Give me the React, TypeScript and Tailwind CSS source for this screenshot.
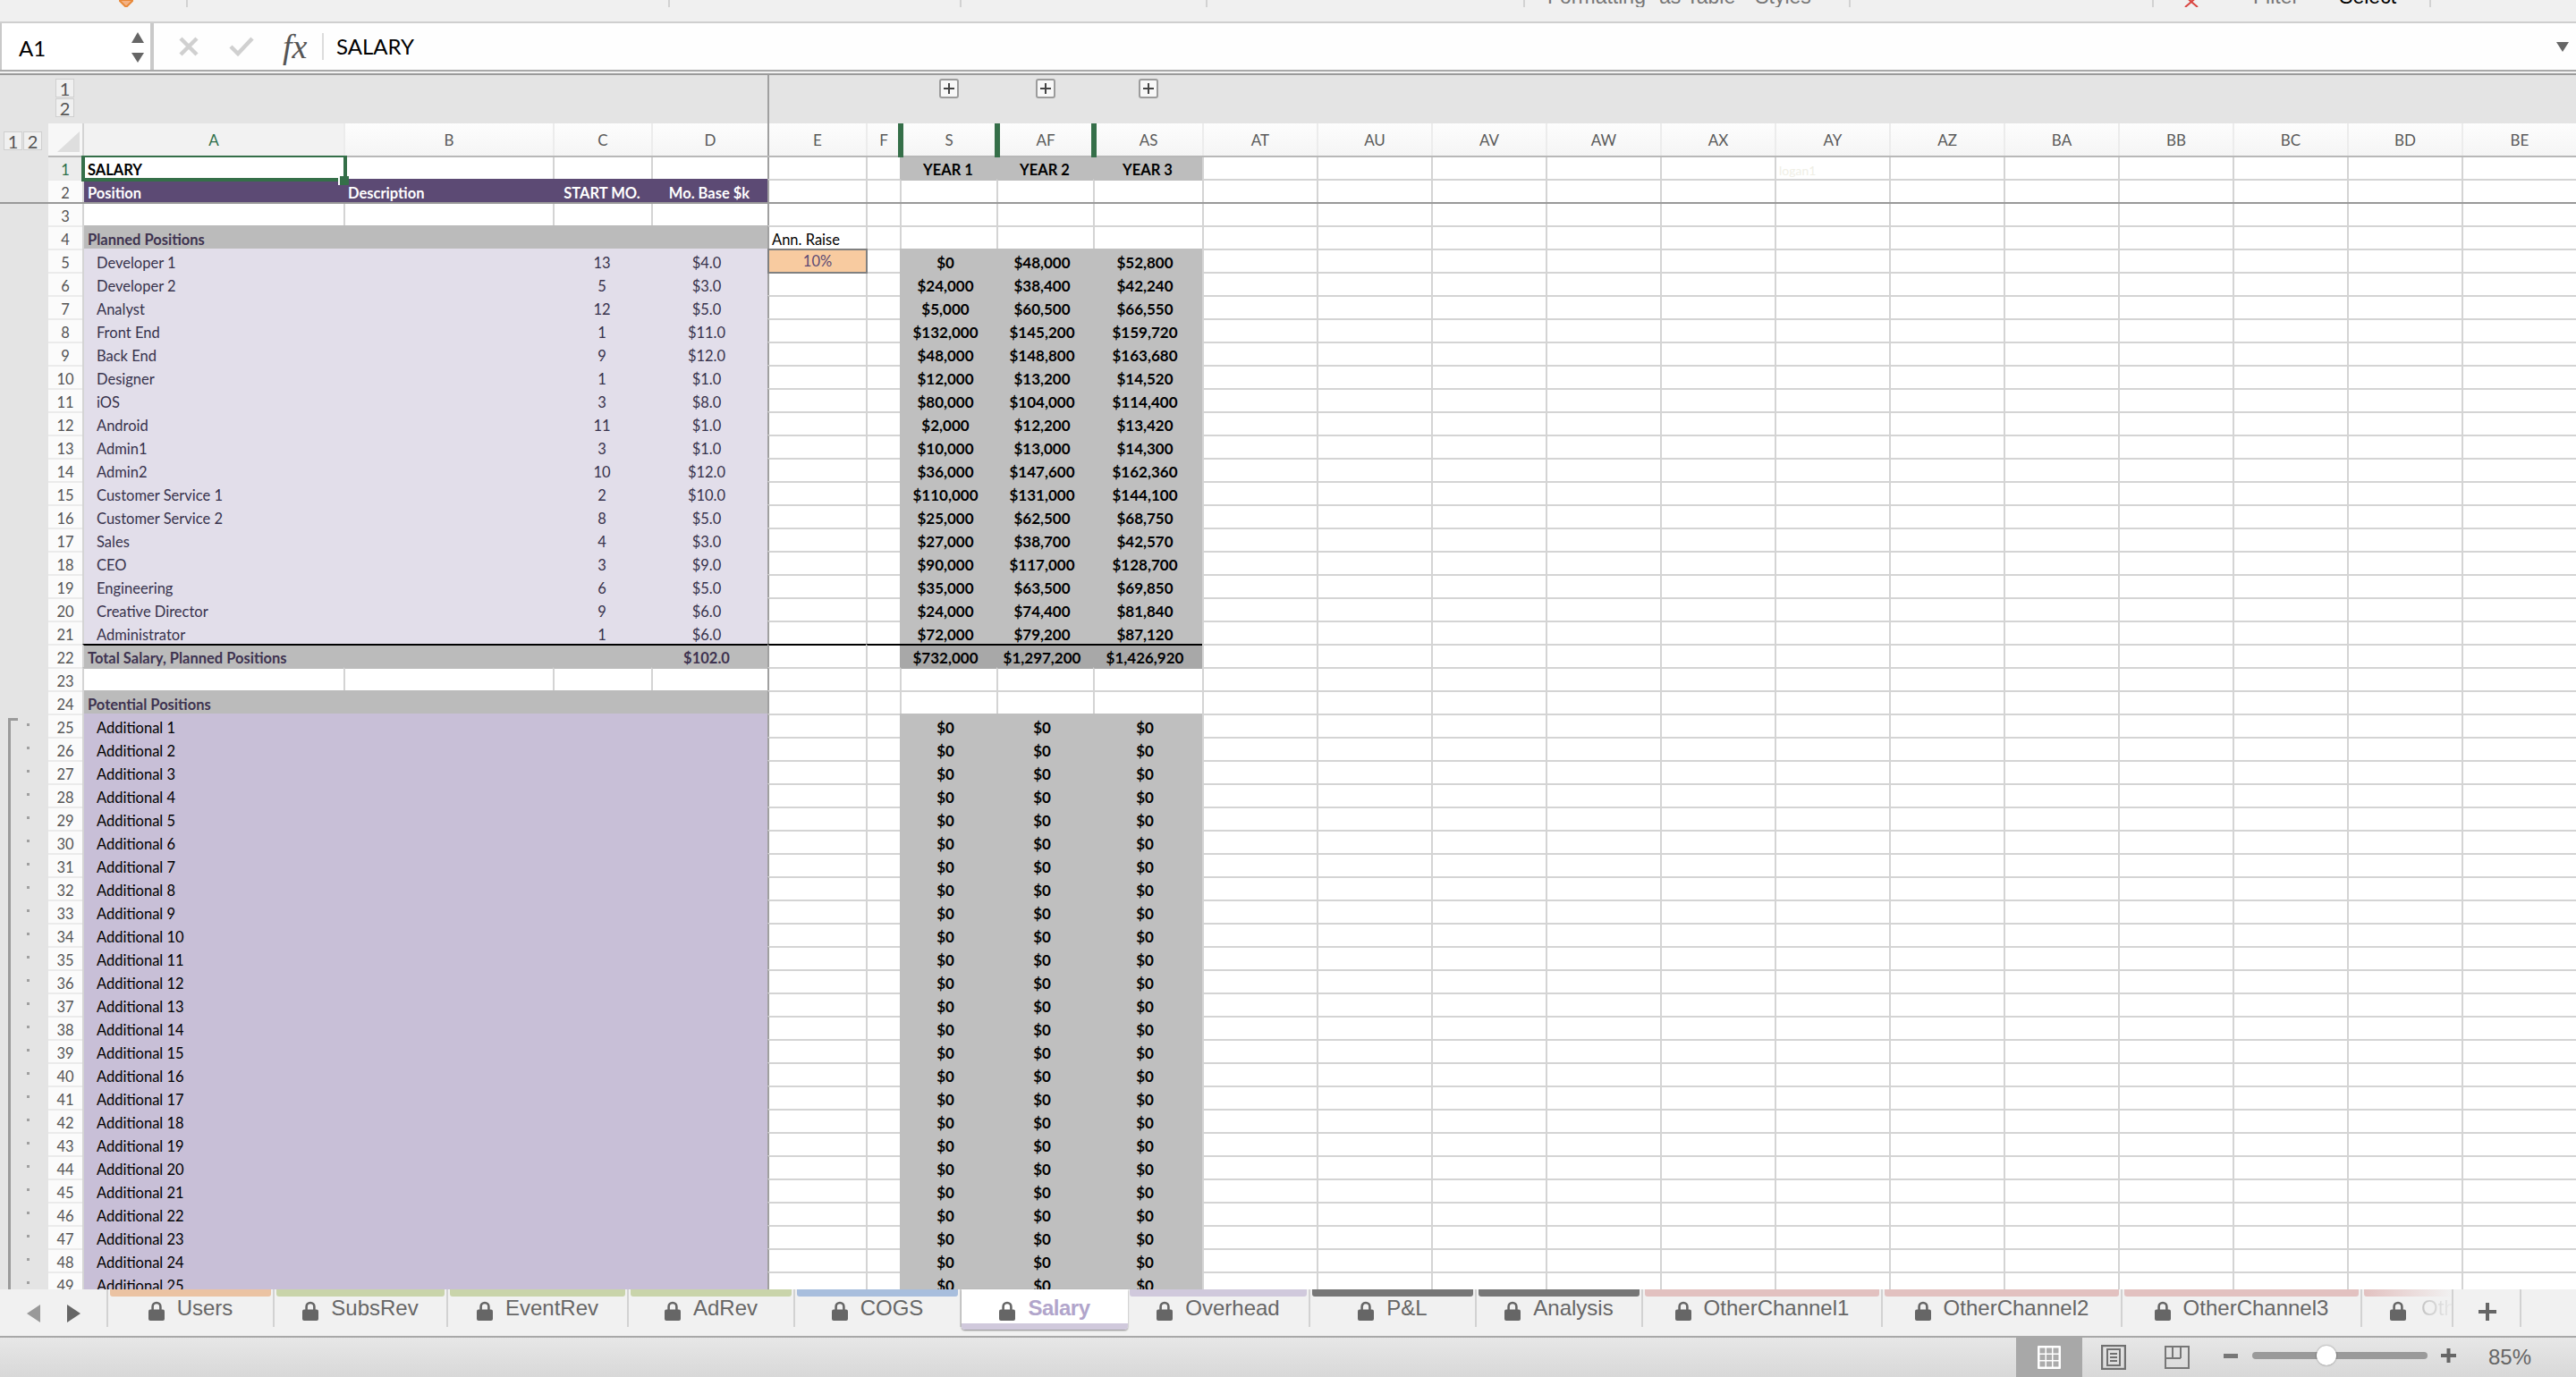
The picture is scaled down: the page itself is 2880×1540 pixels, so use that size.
const COLS = "grid grid-cols-[292px_234px_110px_130px_110px_38px_108px_108px_122px_repeat(12,128px)]";
const GRID = "border-l-2 border-l-[#d4d4d4]";
const EXTRA = ["AT", "AU", "AV", "AW", "AX", "AY", "AZ", "BA", "BB", "BC", "BD", "BE"];

const planned: [string, string, string, string, string, string][] = [
  ["Developer 1", "13", "$4.0", "$0", "$48,000", "$52,800"],
  ["Developer 2", "5", "$3.0", "$24,000", "$38,400", "$42,240"],
  ["Analyst", "12", "$5.0", "$5,000", "$60,500", "$66,550"],
  ["Front End", "1", "$11.0", "$132,000", "$145,200", "$159,720"],
  ["Back End", "9", "$12.0", "$48,000", "$148,800", "$163,680"],
  ["Designer", "1", "$1.0", "$12,000", "$13,200", "$14,520"],
  ["iOS", "3", "$8.0", "$80,000", "$104,000", "$114,400"],
  ["Android", "11", "$1.0", "$2,000", "$12,200", "$13,420"],
  ["Admin1", "3", "$1.0", "$10,000", "$13,000", "$14,300"],
  ["Admin2", "10", "$12.0", "$36,000", "$147,600", "$162,360"],
  ["Customer Service 1", "2", "$10.0", "$110,000", "$131,000", "$144,100"],
  ["Customer Service 2", "8", "$5.0", "$25,000", "$62,500", "$68,750"],
  ["Sales", "4", "$3.0", "$27,000", "$38,700", "$42,570"],
  ["CEO", "3", "$9.0", "$90,000", "$117,000", "$128,700"],
  ["Engineering", "6", "$5.0", "$35,000", "$63,500", "$69,850"],
  ["Creative Director", "9", "$6.0", "$24,000", "$74,400", "$81,840"],
  ["Administrator", "1", "$6.0", "$72,000", "$79,200", "$87,120"],
];

const tabs = [
  { name: "Users", w: "w-[186px]", strip: "bg-[#ebc3a3]" },
  { name: "SubsRev", w: "w-[194px]", strip: "bg-[#c9d4aa]" },
  { name: "EventRev", w: "w-[202px]", strip: "bg-[#c9d4aa]" },
  { name: "AdRev", w: "w-[186px]", strip: "bg-[#c9d4aa]" },
  { name: "COGS", w: "w-[186px]", strip: "bg-[#a8bedd]" },
  { name: "Salary", w: "w-[186px]", strip: "bg-[#d0c9dc]", active: true },
  { name: "Overhead", w: "w-[204px]", strip: "bg-[#d0c9dc]" },
  { name: "P&L", w: "w-[186px]", strip: "bg-[#777777]" },
  { name: "Analysis", w: "w-[186px]", strip: "bg-[#777777]" },
  { name: "OtherChannel1", w: "w-[268px]", strip: "bg-[#e2c1c0]" },
  { name: "OtherChannel2", w: "w-[268px]", strip: "bg-[#e2c1c0]" },
  { name: "OtherChannel3", w: "w-[268px]", strip: "bg-[#e2c1c0]" },
];

function Lock() {
  return (
    <svg width="18" height="22" viewBox="0 0 18 22" className="shrink-0">
      <path d="M4.6 11V6.4a4.4 4.4 0 0 1 8.8 0V11" fill="none" stroke="#666" strokeWidth="2.6" />
      <rect x="0" y="9.5" width="18" height="12.5" rx="2" fill="#666" />
    </svg>
  );
}

function Toolbar() {
  const seg = "h-[8px] border-r-2 border-[#d2d2d2] flex items-end overflow-hidden shrink-0";
  return (
    <div className="h-[26px] shrink-0 bg-[#f0f0f0] border-b-2 border-[#cfcfcf] flex font-['Liberation_Sans',sans-serif] text-[23px] leading-none text-[#777]">
      <div className={`${seg} w-[210px] pl-[133px] items-start`}>
        <svg width="16" height="8" viewBox="0 0 16 8">
          <path d="M0 0H16L8 8Z" fill="#f4b183" stroke="#e8893a" strokeWidth="2" />
        </svg>
      </div>
      <div className={`${seg} w-[539px]`} />
      <div className={`${seg} w-[326px]`} />
      <div className={`${seg} w-[275px]`} />
      <div className={`${seg} w-[355px]`} />
      <div className={`${seg} w-[364px] pl-[25px]`}>
        <span>Formatting</span>
        <span className="ml-[15px]">as Table</span>
        <span className="ml-[22px]">Styles</span>
      </div>
      <div className={`${seg} w-[339px]`} />
      <div className={`${seg} w-[310px] pl-[30px]`}>
        <svg width="24" height="8" viewBox="0 0 24 8" className="self-start">
          <path d="M3 -6L12 2L21 -6M12 2L5 8M12 2L19 8" fill="none" stroke="#d9443f" strokeWidth="2" />
        </svg>
        <span className="ml-[57px]">Filter</span>
        <span className="ml-[45px] text-black">Select</span>
      </div>
    </div>
  );
}

function FormulaBar() {
  return (
    <div className="shrink-0">
      <div className="h-[54px] flex border-b-2 border-[#a9a9a9] bg-white">
        <div className="w-[172px] shrink-0 border-l-2 border-r-4 border-[#c9c9c9] flex items-center justify-between pl-[19px] pr-[7px]">
          <span className="font-['Lato',sans-serif] text-[24px] leading-none text-black mt-[4px]">A1</span>
          <svg width="14" height="34" viewBox="0 0 14 34" className="mt-[1px]">
            <path d="M7 0L14 12H0Z" fill="#666" />
            <path d="M7 34L0 23H14Z" fill="#666" />
          </svg>
        </div>
        <div className="flex-1 flex items-center bg-[#fefefe]">
          <svg width="22" height="22" viewBox="0 0 22 22" className="ml-[28px]">
            <path d="M2 2L20 20M20 2L2 20" stroke="#d0d0d0" strokeWidth="4.5" fill="none" />
          </svg>
          <svg width="28" height="22" viewBox="0 0 28 22" className="ml-[34px]">
            <path d="M2 11L10 19L26 2" stroke="#d0d0d0" strokeWidth="4.5" fill="none" />
          </svg>
          <span className="ml-[32px] w-[30px] font-['Liberation_Serif',serif] italic text-[38px] leading-none text-[#555]">fx</span>
          <span className="ml-[14px] w-[2px] h-[30px] bg-[#dcdcdc]" />
          <span className="ml-[14px] font-['Lato',sans-serif] text-[24px] leading-none text-black">SALARY</span>
          <svg width="14" height="11" viewBox="0 0 14 11" className="ml-auto mr-[8px]">
            <path d="M0 0H14L7 11Z" fill="#666" />
          </svg>
        </div>
      </div>
      <div className="h-[4px] bg-[#f2f2f2] border-b-2 border-[#9a9a9a]" />
    </div>
  );
}

function LevelButton({ label }: { label: string }) {
  return (
    <div className="w-[21px] h-[21px] bg-[#f0f0f0] border border-[#cfcfcf] flex items-center justify-center text-[20px] leading-none text-[#555]">
      {label}
    </div>
  );
}

function PlusButton() {
  return (
    <div className="pl-[2px]">
      <div className="mt-[4px] w-[22px] h-[22px] mx-auto rounded-[3px] border-2 border-[#9c9c9c] bg-[#f8f8f8] flex items-center justify-center">
        <svg width="12" height="12" viewBox="0 0 12 12">
          <path d="M6 0V12M0 6H12" stroke="#444" strokeWidth="2" />
        </svg>
      </div>
    </div>
  );
}

function OutlineStrip() {
  return (
    <div className="h-[54px] shrink-0 flex bg-[#e4e4e4]">
      <div className="w-[92px] shrink-0 pl-[62px] pt-[4px] flex flex-col gap-[1px]">
        <LevelButton label="1" />
        <LevelButton label="2" />
      </div>
      <div className={COLS}>
        <div />
        <div />
        <div />
        <div />
        <div className="border-l-2 border-l-[#a0a0a0]" />
        <div />
        <div><PlusButton /></div>
        <div><PlusButton /></div>
        <div><PlusButton /></div>
      </div>
    </div>
  );
}

function HeadCell({ label, left, bar, sel }: { label: string; left?: string; bar?: boolean; sel?: boolean }) {
  return (
    <div className={`relative flex items-center justify-center border-l-2 ${left ?? "border-l-[#ececec]"} ${sel ? "bg-[#f2f2f2] text-[#2f6f4a]" : "bg-gradient-to-b from-[#fdfdfd] to-[#f5f5f5] text-[#5a5a5a]"}`}>
      {bar && <span className="absolute -left-[4px] top-0 h-[38px] w-[6px] bg-[#356f49] z-10" />}
      {label}
    </div>
  );
}

function ColumnHeader() {
  return (
    <div className="h-[36px] shrink-0 flex bg-[#e4e4e4] text-[17px] leading-none">
      <div className="w-[54px] shrink-0 pl-[4px] pt-[9px] flex gap-[1px] items-start">
        <LevelButton label="1" />
        <LevelButton label="2" />
      </div>
      <div className="w-[38px] shrink-0 bg-[#f7f7f7] flex items-end justify-end pr-[3px] pb-[4px]">
        <svg width="25" height="23" viewBox="0 0 25 23">
          <path d="M25 0V23H0Z" fill="#dedede" />
        </svg>
      </div>
      <div className={COLS}>
        <HeadCell label="A" sel left="border-l-[#d4d4d4]" />
        <HeadCell label="B" />
        <HeadCell label="C" />
        <HeadCell label="D" />
        <HeadCell label="E" left="border-l-[#a0a0a0]" />
        <HeadCell label="F" />
        <HeadCell label="S" bar />
        <HeadCell label="AF" bar />
        <HeadCell label="AS" bar />
        {EXTRA.map((c) => (
          <HeadCell key={c} label={c} />
        ))}
      </div>
    </div>
  );
}

type SheetRow = {
  n: number;
  left: "white" | "purple" | "gray" | "lav" | "add";
  a?: string;
  indent?: boolean;
  b?: string;
  c?: string;
  d?: string;
  dMid?: boolean;
  e?: string;
  raise?: boolean;
  right: "white" | "year" | "fill" | "total";
  vals?: string[];
};

const leftFill = {
  white: "bg-white text-black font-bold",
  purple: "bg-[#5c4a74] text-white font-bold",
  gray: "bg-[#bbbbbb] text-[#3e3350] font-bold",
  lav: "bg-[#e2deea] text-[#37324c]",
  add: "bg-[#c8bfd7] text-black",
};

const rightFill = {
  white: "bg-white",
  year: "bg-[#bdbdbd] text-black font-bold",
  fill: "bg-[#bfbfbf] text-black font-bold text-[17px] pr-[6px]",
  total: "bg-[#a8a8a8] text-black font-bold text-[17px] pr-[6px] border-t-2 border-t-black",
};

const TXT = "flex items-end leading-none pb-[2px]";

function Row({ r }: { r: SheetRow }) {
  const noTop = r.n === 1 || r.n === 3;
  const black = r.n === 22;
  const leftTop = black ? "border-t-2 border-t-black" : r.n === 23 ? "border-t-2 border-t-[#bbbbbb]" : "";
  const rightTop =
    r.right !== "white" ? "" : r.n === 2 ? "border-t-2 border-t-[#bdbdbd]" : r.n === 23 ? "border-t-2 border-t-[#a8a8a8]" : noTop ? "" : "border-t-2 border-t-[#d4d4d4]";
  const midTop = black ? "border-t-2 border-t-black" : noTop ? "" : "border-t-2 border-t-[#d4d4d4]";
  const blankTop = noTop ? "" : "border-t-2 border-t-[#d4d4d4]";
  const fill = leftFill[r.left];
  const inner = r.left === "white" ? GRID : "";

  return (
    <div className={`h-[26px] shrink-0 flex ${r.n === 3 ? "border-t-2 border-[#999999]" : ""}`}>
      <div className="relative w-[54px] shrink-0 bg-[#e4e4e4]">
        {r.n >= 25 && (
          <>
            <span className={`absolute left-[9px] w-[3px] bg-[#9a9a9a] bottom-0 ${r.n === 25 ? "top-[5px]" : "top-0"}`} />
            {r.n === 25 && <span className="absolute left-[9px] top-[5px] w-[11px] h-[3px] bg-[#9a9a9a]" />}
            <span className="absolute left-[30px] top-[11px] w-[3px] h-[3px] bg-[#a0a0a0]" />
          </>
        )}
      </div>
      <div className={`w-[38px] shrink-0 flex items-end justify-center pb-[2px] text-[16.5px] leading-none ${r.n === 1 ? "bg-[#ececec] text-[#2f6f4a] border-t-2 border-[#b8b8b8]" : "bg-[#fbfbfb] text-[#555]"} ${r.n === 1 || r.n === 3 ? "" : "border-t-2 border-[#ebebeb]"}`}>
        {r.n}
      </div>
      <div className={`${COLS} ${noTop ? "grid-rows-[24px]" : "grid-rows-[26px]"} ${r.n === 1 ? "border-t-2 border-[#b8b8b8]" : ""}`}>
        <div className={`relative ${TXT} ${GRID} ${fill} ${leftTop} ${r.indent ? "pl-[14px]" : "pl-[4px]"} whitespace-nowrap`}>
          {r.a}
          {r.n === 1 && (
            <>
              <span className="absolute -left-[3px] -top-[4px] w-[297px] h-[31px] border-4 border-[#356f49] z-20" />
              <span className="absolute left-[284px] top-[21px] w-[12px] h-[10px] bg-[#356f49] border-l-2 border-white z-30" />
            </>
          )}
        </div>
        <div className={`${TXT} ${inner} ${fill} ${leftTop} pl-[5px]`}>{r.b}</div>
        <div className={`${TXT} ${inner} ${fill} ${leftTop} justify-center`}>{r.c}</div>
        <div className={`${TXT} ${inner} ${fill} ${leftTop} justify-center ${r.dMid ? "" : "pr-[6px]"}`}>{r.d}</div>

        {r.raise ? (
          <div className="relative z-10 w-[112px] h-[28px] border-2 border-[#808080] bg-[#f8cba0] text-[#5c4a74] flex items-center justify-center leading-none">
            10%
          </div>
        ) : (
          <div className={`${TXT} border-l-2 border-l-[#a0a0a0] ${midTop} pl-[3px] text-black whitespace-nowrap`}>{r.e}</div>
        )}
        <div className={`${GRID} ${midTop}`} />

        {[0, 1, 2].map((i) => (
          <div
            key={i}
            className={`${TXT} justify-center ${rightFill[r.right]} ${r.right === "white" ? `${GRID} ${rightTop}` : ""}`}
          >
            {r.vals?.[i]}
          </div>
        ))}

        {EXTRA.map((c) => (
          <div key={c} className={`${TXT} ${GRID} ${blankTop} pl-[3px] text-[#f0efe6] text-[14px]`}>
            {r.n === 1 && c === "AY" ? "logan1" : ""}
          </div>
        ))}
      </div>
    </div>
  );
}

const rows: SheetRow[] = [
  { n: 1, left: "white", a: "SALARY", right: "year", vals: ["YEAR 1", "YEAR 2", "YEAR 3"] },
  { n: 2, left: "purple", a: "Position", b: "Description", c: "START MO.", d: "Mo. Base $k", dMid: true, right: "white" },
  { n: 3, left: "white", right: "white" },
  { n: 4, left: "gray", a: "Planned Positions", e: "Ann. Raise", right: "white" },
  ...planned.map((p, i): SheetRow => ({
    n: i + 5,
    left: "lav",
    a: p[0],
    indent: true,
    c: p[1],
    d: p[2],
    raise: i === 0,
    right: "fill",
    vals: [p[3], p[4], p[5]],
  })),
  { n: 22, left: "gray", a: "Total Salary, Planned Positions", d: "$102.0", right: "total", vals: ["$732,000", "$1,297,200", "$1,426,920"] },
  { n: 23, left: "white", right: "white" },
  { n: 24, left: "gray", a: "Potential Positions", right: "white" },
  ...Array.from({ length: 25 }, (_, i): SheetRow => ({
    n: i + 25,
    left: "add",
    a: `Additional ${i + 1}`,
    indent: true,
    right: "fill",
    vals: ["$0", "$0", "$0"],
  })),
];

function TabBar() {
  return (
    <div className="h-[52px] shrink-0 flex bg-[#f1f1f1] font-['Liberation_Sans',sans-serif] text-[#666]">
      <div className="w-[121px] h-[42px] shrink-0 border-r-2 border-[#d2d2d2] flex items-start pl-[30px] pt-[17px]">
        <svg width="15" height="20" viewBox="0 0 15 20">
          <path d="M15 0V20L0 10Z" fill="#999" />
        </svg>
        <svg width="15" height="20" viewBox="0 0 15 20" className="ml-[30px]">
          <path d="M0 0V20L15 10Z" fill="#666" />
        </svg>
      </div>
      {tabs.map((t) =>
        t.active ? (
          <div key={t.name} className={`${t.w} h-[45px] shrink-0 flex flex-col bg-white rounded-b-[4px] shadow-[0_1px_2px_rgba(0,0,0,0.45)]`}>
            <div className="flex-1 flex justify-center items-start pt-[13px]">
              <Lock />
              <span className="text-[24px] leading-none ml-[14px] -mt-[4px] font-bold text-[#b1a5cb] tracking-[-0.5px]">{t.name}</span>
            </div>
            <div className={`h-[7px] rounded-b-[4px] ${t.strip}`} />
          </div>
        ) : (
          <div key={t.name} className={`${t.w} h-[42px] shrink-0 border-r-2 border-[#d2d2d2]`}>
            <div className={`h-[8px] mx-[2px] rounded-b-[3px] ${t.strip}`} />
            <div className="flex justify-center items-start pt-[5px]">
              <Lock />
              <span className="text-[24px] leading-none ml-[14px] -mt-[4px] whitespace-nowrap">{t.name}</span>
            </div>
          </div>
        ),
      )}
      <div className="w-[102px] h-[42px] shrink-0 border-r-2 border-[#d2d2d2] overflow-hidden">
        <div className="h-[8px] ml-[2px] rounded-bl-[3px] bg-gradient-to-r from-[#e2c1c0] to-[#f1f1f1]" />
        <div className="flex items-start pt-[5px] pl-[31px]">
          <Lock />
          <span className="text-[24px] leading-none ml-[17px] -mt-[4px] whitespace-nowrap bg-gradient-to-r from-[#c4c4c4] to-[#eeeeee] bg-clip-text text-transparent">Oth</span>
        </div>
      </div>
      <div className="w-[76px] h-[42px] shrink-0 border-r-2 border-[#d2d2d2] flex items-start justify-center pt-[15px] pl-[2px]">
        <svg width="20" height="20" viewBox="0 0 20 20">
          <path d="M10 0V20M0 10H20" stroke="#666" strokeWidth="4" />
        </svg>
      </div>
    </div>
  );
}

function GridIcon() {
  return (
    <svg width="26" height="26" viewBox="0 0 26 26" className="-mt-[1px]">
      <rect width="26" height="26" rx="1" fill="#fff" />
      {[2.5, 10, 17.5].map((y) =>
        [2.5, 10, 17.5].map((x) => <rect key={`${x}-${y}`} x={x} y={y} width="6" height="6" fill="#ababab" />),
      )}
    </svg>
  );
}

function StatusBar() {
  return (
    <div className="flex-1 border-t-2 border-[#a8a8a8] bg-gradient-to-b from-[#e7e7e7] to-[#d8d8d8] flex justify-end items-center pr-[50px] font-['Liberation_Sans',sans-serif] text-[#666]">
      <div className="w-[74px] self-stretch bg-[#a8a8a8] flex items-center justify-center">
        <GridIcon />
      </div>
      <svg width="28" height="28" viewBox="0 0 28 28" className="ml-[21px] -mt-[1px]">
        <rect x="1" y="1" width="26" height="26" fill="none" stroke="#707070" strokeWidth="2.4" />
        <rect x="7" y="5" width="14" height="18" fill="none" stroke="#707070" strokeWidth="2" />
        <path d="M10 10H18M10 14H18M10 18H18" stroke="#707070" strokeWidth="2" />
      </svg>
      <svg width="28" height="26" viewBox="0 0 28 26" className="ml-[43px]">
        <rect x="1" y="1" width="26" height="24" fill="none" stroke="#777" strokeWidth="2" />
        <path d="M9 1V14M18 1V14M1 14H18" fill="none" stroke="#777" strokeWidth="2" />
      </svg>
      <span className="ml-[38px] w-[16px] h-[5px] bg-[#777] -mt-[3px]" />
      <div className="relative ml-[16px] w-[196px] h-[8px] -mt-[4px] rounded-full bg-[#9a9a9a]">
        <span className="absolute left-[72px] -top-[7px] w-[22px] h-[22px] rounded-full bg-white shadow-[0_0_2px_rgba(0,0,0,0.5)]" />
      </div>
      <svg width="17" height="16" viewBox="0 0 17 16" className="ml-[15px] -mt-[4px]">
        <path d="M8.5 0V16M0 8H17" stroke="#666" strokeWidth="4" />
      </svg>
      <span className="ml-[36px] text-[24px] leading-none">85%</span>
    </div>
  );
}

export default function App() {
  return (
    <div className="w-[2880px] h-[1540px] overflow-hidden flex flex-col bg-white font-['Lato',sans-serif] text-[16.5px]">
      <Toolbar />
      <FormulaBar />
      <OutlineStrip />
      <ColumnHeader />
      <div className="h-[1268px] shrink-0 overflow-hidden">
        {rows.map((r) => (
          <Row key={r.n} r={r} />
        ))}
      </div>
      <TabBar />
      <StatusBar />
    </div>
  );
}
